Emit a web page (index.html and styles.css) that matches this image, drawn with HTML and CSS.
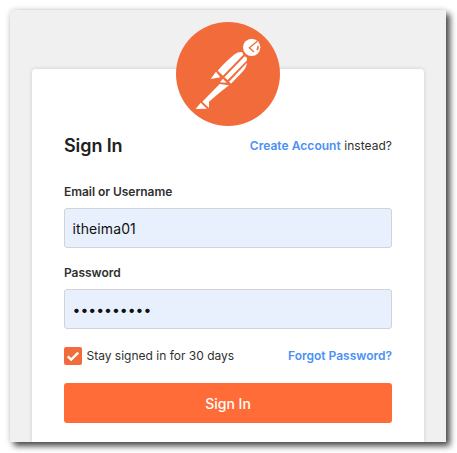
FILE: index.html
```html
<!DOCTYPE html>
<html lang="en">
<head>
<meta charset="utf-8">
<title>Sign In</title>
<link rel="stylesheet" href="styles.css">
</head>
<body>
<main class="window">
  <form class="card">
    <svg class="logo" viewBox="18 21 312 312" aria-hidden="true">
      <circle cx="174" cy="177" r="156" fill="#f26b3a"/>
      <g fill="#fff">
        <circle cx="245" cy="97" r="26"/>
        <path d="M143 167 Q170 137 194 118 Q208 108 217 112 L220 119 L159 182Z"/>
        <path d="M138 170 L151 187 L122 192Z"/>
        <path d="M150 202 L159 191 L170 203Z"/>
        <path d="M163 187 L224 124 L231 128 L230 137 L173 195Z"/>
        <path d="M177 200 L231 143 Q230 158 214 174 L183 206Z"/>
        <path d="M149 207 L177 211 Q148 233 117 260 L117 279 L97 260 Q120 237 149 207Z"/>
        <path d="M92 263 L111 281 L77 282Z"/>
      </g>
      <g fill="none" stroke="#f26b3a" stroke-width="4">
        <path d="M262 79 L238 98 L252 111"/>
        <path d="M263 93 Q266 98 261 105" stroke-width="5"/>
      </g>
    </svg>
    <header class="row heading">
      <h1>Sign In</h1>
      <p><a>Create Account</a> instead?</p>
    </header>
    <label for="user">Email or Username</label>
    <input id="user" type="text" value="itheima01">
    <label for="pass">Password</label>
    <input id="pass" type="password" value="0123456789">
    <div class="row options">
      <span class="stay">
        <svg class="check" viewBox="0 0 18 18"><rect width="18" height="18" rx="2" fill="#f26b3a"/><path d="M3.7 9.3 7.2 12.6 14.2 5.6" fill="none" stroke="#fff" stroke-width="2.4"/></svg>
        Stay signed in for 30 days
      </span>
      <a>Forgot Password?</a>
    </div>
    <button type="button">Sign In</button>
  </form>
</main>
</body>
</html>
```
FILE: styles.css
```css
* { box-sizing: border-box; }
body {
  margin: 0;
  padding: 10px;
  height: 453px;
  overflow: hidden;
  background: #fff;
  font: 12px/16px Inter, sans-serif;
  color: #303030;
}
.window {
  width: 436px;
  height: 432px;
  padding: 59px 22px 0;
  background: #f0f0f0;
  border-radius: 4px 0 0 0;
  box-shadow: 4px 4px 6px rgba(0, 0, 0, .7), 0 0 6px rgba(0, 0, 0, .15);
}
.card {
  position: relative;
  display: flex;
  flex-direction: column;
  width: 392px;
  height: 373px;
  padding: 64px 32px 0;
  background: #fff;
  border-radius: 4px 4px 0 0;
  box-shadow: 0 0 4px rgba(0, 0, 0, .14);
  clip-path: inset(-60px -8px 0 -8px);
}
.logo {
  position: absolute;
  top: -47px;
  left: 144px;
  width: 104px;
  height: 104px;
}
.row { display: flex; justify-content: space-between; align-items: center; }
.heading { height: 26px; margin-bottom: 25px; }
h1, p { margin: 0; }
h1 { font-size: 18px; line-height: 26px; font-weight: 600; letter-spacing: -.1px; color: #212121; }
a { color: #4a90f5; font-weight: 600; }
p { letter-spacing: .04px; }
label { font-weight: 600; margin-bottom: 8px; letter-spacing: -.04px; }
input {
  width: 328px;
  height: 40px;
  margin: 0 0 17px;
  padding: 0 7.5px;
  border: 1px solid #d1d3d6;
  border-radius: 3px;
  background: #e8f0fe;
  font: 14px Inter, sans-serif;
  letter-spacing: .1px;
  color: #111;
  outline: none;
}
input[type="password"] { letter-spacing: 0; }
.options { height: 20px; }
.stay { display: flex; align-items: center; gap: 4.5px; }
.check { width: 18px; height: 18px; }
button {
  height: 40px;
  margin-top: 17px;
  border: 0;
  border-radius: 3px;
  background: #ff6c37;
  color: #fff;
  font: 500 14px Inter, sans-serif;
}
```
